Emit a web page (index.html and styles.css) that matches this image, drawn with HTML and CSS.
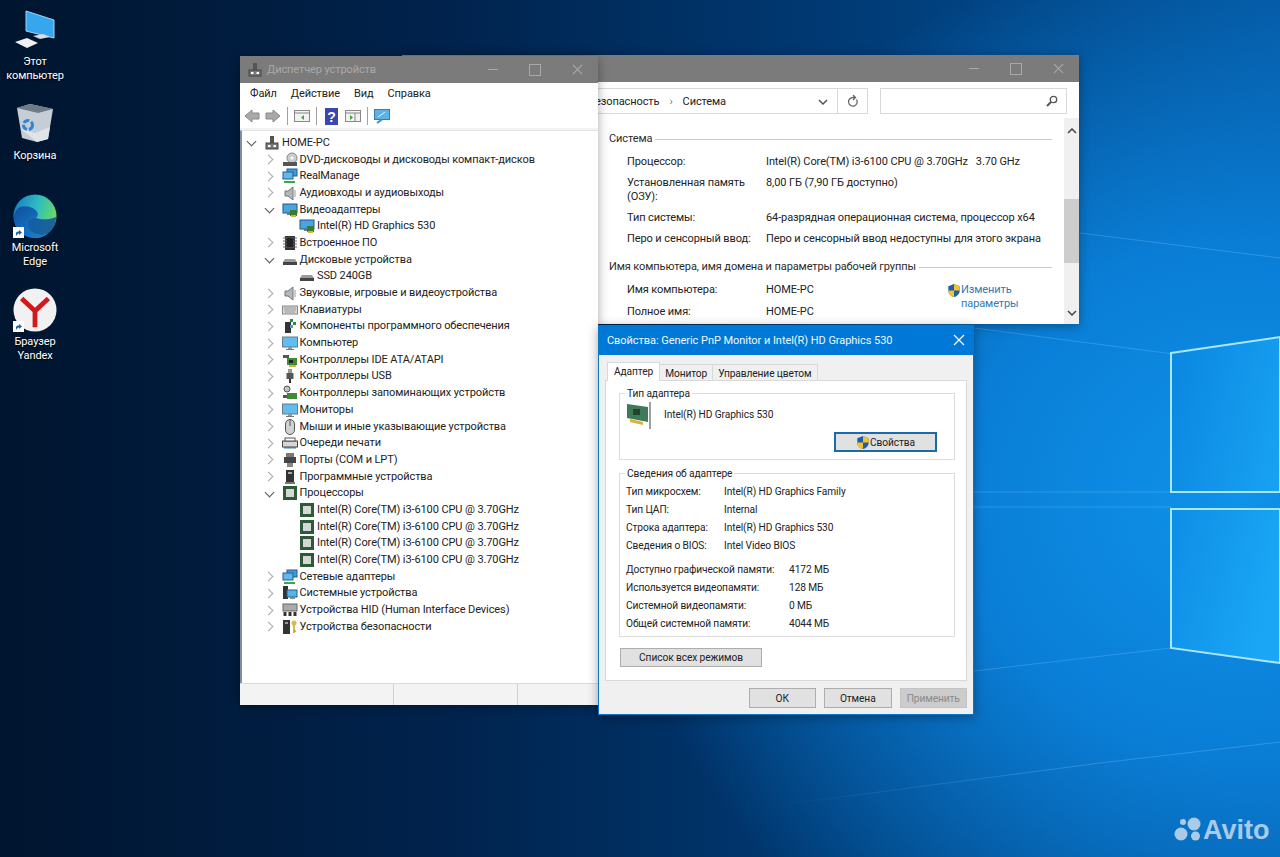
FILE: index.html
```html
<!DOCTYPE html>
<html lang="ru">
<head>
    <meta charset="UTF-8">
    <title>Рабочий стол</title>
    <link rel="stylesheet" href="styles.css">
</head>
<body>
<!-- иконки -->
<svg class="defs" width="0" height="0">
    <defs>
        <linearGradient id="edgeBg" x1="0" y1="0.3" x2="1" y2="0.6">
            <stop offset="0" stop-color="#1c7fc4"/>
            <stop offset="0.5" stop-color="#2fbcc0"/>
            <stop offset="1" stop-color="#6fdc5a"/>
        </linearGradient>
        <linearGradient id="edgeWave" x1="0" y1="0" x2="1" y2="1">
            <stop offset="0" stop-color="#0f4f9e"/>
            <stop offset="1" stop-color="#1b86d8"/>
        </linearGradient>
        <linearGradient id="paneTop" x1="0" y1="0" x2="1" y2="0.7">
            <stop offset="0" stop-color="#0a86e0"/>
            <stop offset="1" stop-color="#1aa6f5"/>
        </linearGradient>
        <linearGradient id="beamFade" gradientUnits="userSpaceOnUse" x1="772" y1="0" x2="1280" y2="0">
            <stop offset="0" stop-color="#7cc8ff" stop-opacity="0"/>
            <stop offset="0.6" stop-color="#7cc8ff" stop-opacity="0.3"/>
        </linearGradient>
        <symbol id="i-pc" viewBox="0 0 16 16"><rect x="6" y="1" width="4" height="7" fill="#555"/><rect x="2" y="8" width="12" height="6" fill="#777" stroke="#444"/><rect x="4" y="10" width="2.500" height="2" fill="#fff"/><rect x="9.500" y="10" width="2.500" height="2" fill="#fff"/></symbol>
        <symbol id="i-disc" viewBox="0 0 16 16"><circle cx="10" cy="6" r="5" fill="#c9ccd0" stroke="#888"/><circle cx="10" cy="6" r="1.5" fill="#fff"/><rect x="1" y="10" width="14" height="4" fill="#555"/></symbol>
        <symbol id="i-net" viewBox="0 0 16 16"><rect x="5" y="1" width="10" height="7" fill="#3f9ad8" stroke="#235f8f"/><rect x="1" y="4" width="10" height="7" fill="#62b8ea" stroke="#235f8f"/><rect x="2" y="13" width="11" height="2" fill="#3da646"/></symbol>
        <symbol id="i-sound" viewBox="0 0 16 16"><path d="M3 6h3l5-4v13l-5-4H3z" fill="#b4b7ba" stroke="#777"/><path d="M13 5v7" stroke="#999"/></symbol>
        <symbol id="i-video" viewBox="0 0 16 16"><rect x="1" y="2" width="14" height="9" fill="#4aa4de" stroke="#1e5a86"/><rect x="5" y="11" width="6" height="2" fill="#777"/><rect x="8" y="8" width="7" height="6" fill="#3c7a2e"/><rect x="9" y="13" width="5" height="2" fill="#d9b23a"/></symbol>
        <symbol id="i-fw" viewBox="0 0 16 16"><rect x="3" y="1" width="10" height="14" fill="#333"/><path d="M1 3h14M1 6h14M1 9h14M1 12h14" stroke="#666"/><rect x="5" y="3" width="6" height="9" fill="#222"/></symbol>
        <symbol id="i-hdd" viewBox="0 0 16 16"><path d="M3 7h10l2 3v3H1v-3z" fill="#9a9a9a"/><rect x="1" y="10" width="14" height="3" fill="#444"/></symbol>
        <symbol id="i-kbd" viewBox="0 0 16 16"><rect x="0.5" y="4" width="15" height="8" fill="#d7d8da" stroke="#888"/><path d="M2 6h12M2 8h12M3 10h10" stroke="#999"/></symbol>
        <symbol id="i-soft" viewBox="0 0 16 16"><rect x="3" y="4" width="6" height="11" fill="#333"/><rect x="8" y="1" width="3" height="3" fill="#2f8a3a"/><rect x="11" y="4" width="3" height="3" fill="#2f8a3a"/><rect x="8" y="7" width="3" height="3" fill="#3aa0d8"/></symbol>
        <symbol id="i-comp" viewBox="0 0 16 16"><rect x="0.5" y="2" width="15" height="10" fill="#5fbdf0" stroke="#6b7b88"/><rect x="6" y="12" width="4" height="2" fill="#999"/><rect x="4" y="14" width="8" height="1" fill="#777"/></symbol>
        <symbol id="i-ide" viewBox="0 0 16 16"><path d="M1 3h6v3H1z" fill="#555"/><rect x="5" y="6" width="10" height="7" fill="#3f8a36"/><rect x="7" y="8" width="4" height="3" fill="#222"/><rect x="7" y="13" width="7" height="2" fill="#d9b23a"/></symbol>
        <symbol id="i-usb" viewBox="0 0 16 16"><rect x="6" y="1" width="4" height="4" fill="#999"/><rect x="4.5" y="5" width="7" height="6" fill="#555"/><path d="M8 11v4" stroke="#333" stroke-width="2"/></symbol>
        <symbol id="i-store" viewBox="0 0 16 16"><circle cx="5" cy="4" r="3" fill="#c0c3c6" stroke="#555"/><rect x="5" y="8" width="10" height="6" fill="#3f8a36"/><rect x="1" y="10" width="4" height="3" fill="#555"/></symbol>
        <symbol id="i-mouse" viewBox="0 0 16 16"><rect x="3.5" y="0.5" width="9" height="15" rx="4.5" fill="#cfd1d3" stroke="#555"/><path d="M8 1v6" stroke="#555"/></symbol>
        <symbol id="i-print" viewBox="0 0 16 16"><rect x="0.5" y="6" width="15" height="6" fill="#d5d6d8" stroke="#444"/><rect x="3" y="3" width="10" height="3" fill="#fff" stroke="#555"/><rect x="2" y="12" width="12" height="1.5" fill="#3c7fb8"/></symbol>
        <symbol id="i-port" viewBox="0 0 16 16"><rect x="4" y="1" width="8" height="4" fill="#777"/><rect x="2" y="5" width="12" height="6" fill="#444"/><rect x="5" y="11" width="6" height="4" fill="#888"/></symbol>
        <symbol id="i-swdev" viewBox="0 0 16 16"><rect x="4" y="1" width="8" height="12" fill="#333"/><rect x="6" y="3" width="4" height="2" fill="#aaa"/><rect x="3" y="13" width="10" height="2" fill="#777"/></symbol>
        <symbol id="i-cpu" viewBox="0 0 16 16"><rect x="1" y="1" width="14" height="14" fill="#2e5a3a"/><rect x="4" y="4" width="8" height="8" fill="#d3d8d3"/></symbol>
        <symbol id="i-sys" viewBox="0 0 16 16"><rect x="1" y="1" width="5" height="13" fill="#333"/><rect x="5" y="5" width="10" height="7" fill="#58b3e8" stroke="#23628f"/><rect x="8" y="12" width="5" height="2" fill="#888"/></symbol>
        <symbol id="i-hid" viewBox="0 0 16 16"><rect x="1" y="2" width="14" height="7" fill="#a8abae" stroke="#666"/><path d="M3 10v4M8 10v4M13 10v4" stroke="#333" stroke-width="3"/></symbol>
        <symbol id="i-sec" viewBox="0 0 16 16"><rect x="1" y="1" width="7" height="14" fill="#333"/><rect x="3" y="3" width="3" height="2" fill="#999"/><circle cx="12" cy="4" r="2.5" fill="#e0b83a"/><path d="M12 6v8M12 12h2" stroke="#c99f26" stroke-width="1.5"/></symbol>
        <symbol id="i-shield" viewBox="0 0 16 16"><path d="M8 0.5 14.5 3v5c0 4-3 6.500-6.500 7.500C4.500 14.500 1.500 12 1.500 8V3z" fill="#1f5fa8"/><path d="M8 0.500 14.500 3v5H8zM8 8v7.500C4.500 14.500 1.500 12 1.500 8z" fill="#f2c230"/></symbol>
        <symbol id="i-link" viewBox="0 0 11 11"><rect width="11" height="11" fill="#fff"/><path d="M3 9V6.500C3 5 4 4.500 6 4.500V3l3 2.500L6 8V6.500C5 6.500 4.500 7 3 9z" fill="#1c5fa8"/></symbol>
        <symbol id="i-x" viewBox="0 0 12 12"><path d="M1 1 11 11M11 1 1 11" fill="none" stroke="currentColor" stroke-width="1.200"/></symbol>
    </defs>
</svg>

<!-- обои -->
<svg class="wallpaper" viewBox="0 0 1280 857" width="1280" height="857">
    <g stroke="#7cc8ff" stroke-opacity="0.3" fill="none">
        <path d="M1080 233 1280 258M974 328 1280 368M974 492H1171M974 507H1171M974 671 1171 648 1280 636"/>
    </g>
    <path d="M772 806 1100 763 1280 742" fill="none" stroke="url(#beamFade)"/>
    <path d="M1171 353 1280 337V492H1171zM1171 509H1280V663L1171 648z" fill="url(#paneTop)" stroke="#a8e8ff" stroke-width="2"/>
</svg>

<!-- значки рабочего стола -->
<div class="desktop-icons">
    <div class="shortcut">
        <svg class="shortcut-pic" viewBox="0 0 44 46">
            <path d="M13 3 41 12V30L13 23z" fill="#36a6ee" stroke="#9ed6f6"/>
            <path d="M20 28 30 26 37 29 27 31z" fill="#d9dde0"/>
            <path d="M2 34 14 30 25 35 14 40z" fill="#eef0f2"/>
        </svg>
        <span>Этот<br>компьютер</span>
    </div>
    <div class="shortcut">
        <svg class="shortcut-pic" viewBox="0 0 44 46">
            <path d="M4 6 17 2 40 7 35 37 24 40 9 36z" fill="#c5ced6"/>
            <path d="M4 6 17 2 40 7 25 11z" fill="#6f7b85"/>
            <path d="M8 27 24 40 35 37 37 25 22 31z" fill="#dfe4e8"/>
            <circle cx="15" cy="23" r="4.500" fill="none" stroke="#2f86d8" stroke-width="3" stroke-dasharray="6 2"/>
        </svg>
        <span>Корзина</span>
    </div>
    <div class="shortcut">
        <div class="shortcut-pic-wrap">
            <svg class="shortcut-pic big" viewBox="0 0 46 46">
                <circle cx="23" cy="23" r="22.500" fill="url(#edgeBg)"/>
                <path d="M1 24C2 12 13 11 21 15 27 18 27 23 24 25 20 24 15 26 15 32 15 40 27 46 37 41 31 46 26 46 23 46 10 46 1 36 1 24z" fill="url(#edgeWave)"/>
                <path d="M24 25C30 27 38 27 45 24 45 33 41 38 37 41 27 46 15 40 15 32 15 26 20 24 24 25z" fill="#0e4fa3" opacity="0.85"/>
            </svg>
            <svg class="shortcut-arrow" viewBox="0 0 11 11"><use href="#i-link"/></svg>
        </div>
        <span>Microsoft<br>Edge</span>
    </div>
    <div class="shortcut">
        <div class="shortcut-pic-wrap">
            <svg class="shortcut-pic big" viewBox="0 0 46 46">
                <circle cx="23" cy="23" r="22.500" fill="#f1f1f1"/>
                <path d="M9 11 23 24 37 11M23 24V41" fill="none" stroke="#d3181c" stroke-width="5"/>
            </svg>
            <svg class="shortcut-arrow" viewBox="0 0 11 11"><use href="#i-link"/></svg>
        </div>
        <span>Браузер<br>Yandex</span>
    </div>
</div>

<!-- окно Система -->
<div class="window system">
    <header class="title-bar idle">
        <div class="title-buttons">
            <span class="min"></span>
            <span class="max"></span>
            <span class="close"><svg width="11" height="11"><use href="#i-x"/></svg></span>
        </div>
    </header>
    <div class="address-row">
        <div class="address">
            <span>Система и безопасность</span>
            <span class="crumb">&rsaquo;</span>
            <span>Система</span>
            <svg class="addr-chevron" width="10" height="6" viewBox="0 0 10 6"><path d="M1 1 5 5 9 1" fill="none" stroke="#555" stroke-width="1.500"/></svg>
        </div>
        <div class="refresh">
            <svg width="12" height="13" viewBox="0 0 12 13"><path d="M9.500 4.500A4.300 4.300 0 1 1 6 2.500H8M6 0 8.500 2.500 6 5" fill="none" stroke="#666" stroke-width="1.300"/></svg>
        </div>
        <div class="search">
            <svg width="12" height="12" viewBox="0 0 12 12"><circle cx="7.500" cy="4.500" r="3.200" fill="none" stroke="#555" stroke-width="1.300"/><path d="M5 7 1 11" stroke="#555" stroke-width="2"/></svg>
        </div>
    </div>
    <div class="system-body">
        <div class="system-content">
            <div class="section-title"><span>Система</span></div>
            <div class="info-grid">
                <span>Процессор:</span><span>Intel(R) Core(TM) i3-6100 CPU @ 3.70GHz &nbsp; 3.70 GHz</span>
                <span>Установленная память (ОЗУ):</span><span>8,00 ГБ (7,90 ГБ доступно)</span>
                <span>Тип системы:</span><span>64-разрядная операционная система, процессор x64</span>
                <span>Перо и сенсорный ввод:</span><span>Перо и сенсорный ввод недоступны для этого экрана</span>
            </div>
            <div class="section-title second"><span>Имя компьютера, имя домена и параметры рабочей группы</span></div>
            <div class="info-grid name-grid">
                <span>Имя компьютера:</span><span>HOME-PC</span>
                <a class="change-link">
                    <svg width="14" height="15" viewBox="0 0 16 16"><use href="#i-shield"/></svg>
                    <span>Изменить<br>параметры</span>
                </a>
                <span>Полное имя:</span><span>HOME-PC</span>
            </div>
        </div>
        <div class="scrollbar">
            <svg width="10" height="6" viewBox="0 0 10 6"><path d="M1 5 5 1 9 5" fill="none" stroke="#444" stroke-width="1.500"/></svg>
            <div class="thumb"></div>
            <svg width="10" height="6" viewBox="0 0 10 6"><path d="M1 1 5 5 9 1" fill="none" stroke="#444" stroke-width="1.500"/></svg>
        </div>
    </div>
</div>

<!-- Диспетчер устройств -->
<div class="window devmgr">
    <header class="title-bar idle">
        <svg class="title-icon" width="16" height="16"><use href="#i-pc"/></svg>
        <span class="title-text">Диспетчер устройств</span>
        <div class="title-buttons">
            <span class="min"></span>
            <span class="max"></span>
            <span class="close"><svg width="11" height="11"><use href="#i-x"/></svg></span>
        </div>
    </header>
    <nav class="menu">
        <span>Файл</span>
        <span>Действие</span>
        <span>Вид</span>
        <span>Справка</span>
    </nav>
    <div class="toolbar">
        <svg width="16" height="14" viewBox="0 0 16 14"><path d="M1 7 8 1V4H15V10H8V13z" fill="#a9a9a9" stroke="#888"/></svg>
        <svg width="16" height="14" viewBox="0 0 16 14"><path d="M15 7 8 1V4H1V10H8V13z" fill="#a9a9a9" stroke="#888"/></svg>
        <i class="tool-sep"></i>
        <svg width="16" height="14" viewBox="0 0 16 14"><rect x="0.500" y="1.500" width="15" height="11" fill="#f2f2f2" stroke="#888"/><path d="M1 4H15" stroke="#888"/><path d="M10 6 7 8.500 10 11z" fill="#3a3"/></svg>
        <i class="tool-sep"></i>
        <svg class="tool-help" width="13" height="17" viewBox="0 0 13 17"><rect width="13" height="17" fill="#3b47b0"/><text x="6.500" y="14" text-anchor="middle" class="help-mark">?</text></svg>
        <svg width="16" height="14" viewBox="0 0 16 14"><rect x="0.500" y="1.500" width="15" height="11" fill="#f2f2f2" stroke="#888"/><path d="M1 4H15M10 4V12" stroke="#888"/><path d="M5 6 8 8.500 5 11z" fill="#3a3"/></svg>
        <i class="tool-sep"></i>
        <svg width="16" height="15" viewBox="0 0 16 15"><rect x="0.500" y="0.500" width="15" height="10" fill="#58b3e8" stroke="#3a7da8"/><path d="M3 14 8 10.500" stroke="#4a8fb8" stroke-width="2"/><path d="M4 8 11 3" stroke="#e8f6ff"/></svg>
    </div>
    <div class="tree">
        <div class="row l0 open"><svg class="ic"><use href="#i-pc"/></svg><span>HOME-PC</span></div>
        <div class="row l1"><svg class="ic"><use href="#i-disc"/></svg><span>DVD-дисководы и дисководы компакт-дисков</span></div>
        <div class="row l1"><svg class="ic"><use href="#i-net"/></svg><span>RealManage</span></div>
        <div class="row l1"><svg class="ic"><use href="#i-sound"/></svg><span>Аудиовходы и аудиовыходы</span></div>
        <div class="row l1 open"><svg class="ic"><use href="#i-video"/></svg><span>Видеоадаптеры</span></div>
        <div class="row l2"><svg class="ic"><use href="#i-video"/></svg><span>Intel(R) HD Graphics 530</span></div>
        <div class="row l1"><svg class="ic"><use href="#i-fw"/></svg><span>Встроенное ПО</span></div>
        <div class="row l1 open"><svg class="ic"><use href="#i-hdd"/></svg><span>Дисковые устройства</span></div>
        <div class="row l2"><svg class="ic"><use href="#i-hdd"/></svg><span>SSD 240GB</span></div>
        <div class="row l1"><svg class="ic"><use href="#i-sound"/></svg><span>Звуковые, игровые и видеоустройства</span></div>
        <div class="row l1"><svg class="ic"><use href="#i-kbd"/></svg><span>Клавиатуры</span></div>
        <div class="row l1"><svg class="ic"><use href="#i-soft"/></svg><span>Компоненты программного обеспечения</span></div>
        <div class="row l1"><svg class="ic"><use href="#i-comp"/></svg><span>Компьютер</span></div>
        <div class="row l1"><svg class="ic"><use href="#i-ide"/></svg><span>Контроллеры IDE ATA/ATAPI</span></div>
        <div class="row l1"><svg class="ic"><use href="#i-usb"/></svg><span>Контроллеры USB</span></div>
        <div class="row l1"><svg class="ic"><use href="#i-store"/></svg><span>Контроллеры запоминающих устройств</span></div>
        <div class="row l1"><svg class="ic"><use href="#i-comp"/></svg><span>Мониторы</span></div>
        <div class="row l1"><svg class="ic"><use href="#i-mouse"/></svg><span>Мыши и иные указывающие устройства</span></div>
        <div class="row l1"><svg class="ic"><use href="#i-print"/></svg><span>Очереди печати</span></div>
        <div class="row l1"><svg class="ic"><use href="#i-port"/></svg><span>Порты (COM и LPT)</span></div>
        <div class="row l1"><svg class="ic"><use href="#i-swdev"/></svg><span>Программные устройства</span></div>
        <div class="row l1 open"><svg class="ic"><use href="#i-cpu"/></svg><span>Процессоры</span></div>
        <div class="row l2"><svg class="ic"><use href="#i-cpu"/></svg><span>Intel(R) Core(TM) i3-6100 CPU @ 3.70GHz</span></div>
        <div class="row l2"><svg class="ic"><use href="#i-cpu"/></svg><span>Intel(R) Core(TM) i3-6100 CPU @ 3.70GHz</span></div>
        <div class="row l2"><svg class="ic"><use href="#i-cpu"/></svg><span>Intel(R) Core(TM) i3-6100 CPU @ 3.70GHz</span></div>
        <div class="row l2"><svg class="ic"><use href="#i-cpu"/></svg><span>Intel(R) Core(TM) i3-6100 CPU @ 3.70GHz</span></div>
        <div class="row l1"><svg class="ic"><use href="#i-net"/></svg><span>Сетевые адаптеры</span></div>
        <div class="row l1"><svg class="ic"><use href="#i-sys"/></svg><span>Системные устройства</span></div>
        <div class="row l1"><svg class="ic"><use href="#i-hid"/></svg><span>Устройства HID (Human Interface Devices)</span></div>
        <div class="row l1"><svg class="ic"><use href="#i-sec"/></svg><span>Устройства безопасности</span></div>
    </div>
    <footer class="status">
        <span></span>
        <span></span>
        <span></span>
    </footer>
</div>

<!-- диалог свойств -->
<div class="window props">
    <header class="title-bar active">
        <span class="title-text">Свойства: Generic PnP Monitor и Intel(R) HD Graphics 530</span>
        <svg class="dialog-close" width="12" height="12"><use href="#i-x"/></svg>
    </header>
    <div class="props-body">
        <div class="tabs">
            <span class="tab selected">Адаптер</span>
            <span class="tab">Монитор</span>
            <span class="tab">Управление цветом</span>
        </div>
        <div class="tab-panel">
            <fieldset class="group adapter-type">
                <legend>Тип адаптера</legend>
                <div class="adapter-line">
                    <svg width="28" height="28" viewBox="0 0 28 28">
                        <path d="M1 3 22 6V21L1 17z" fill="#3d7a55"/>
                        <rect x="7" y="8" width="7" height="6" fill="#24402f"/>
                        <path d="M4 18 17 21V24L4 21z" fill="#d6b23c"/>
                        <path d="M24 1V28" stroke="#9aa0a6" stroke-width="2"/>
                    </svg>
                    <span>Intel(R) HD Graphics 530</span>
                </div>
                <button type="button" class="btn default">
                    <svg width="14" height="15" viewBox="0 0 16 16"><use href="#i-shield"/></svg>Свойства
                </button>
            </fieldset>
            <fieldset class="group adapter-info">
                <legend>Сведения об адаптере</legend>
                <div class="pairs chip">
                    <span>Тип микросхем:</span><span>Intel(R) HD Graphics Family</span>
                    <span>Тип ЦАП:</span><span>Internal</span>
                    <span>Строка адаптера:</span><span>Intel(R) HD Graphics 530</span>
                    <span>Сведения о BIOS:</span><span>Intel Video BIOS</span>
                </div>
                <div class="pairs memory">
                    <span>Доступно графической памяти:</span><span>4172 МБ</span>
                    <span>Используется видеопамяти:</span><span>128 МБ</span>
                    <span>Системной видеопамяти:</span><span>0 МБ</span>
                    <span>Общей системной памяти:</span><span>4044 МБ</span>
                </div>
            </fieldset>
            <button type="button" class="btn modes">Список всех режимов</button>
        </div>
        <div class="dialog-actions">
            <button type="button" class="btn">ОК</button>
            <button type="button" class="btn">Отмена</button>
            <button type="button" class="btn disabled">Применить</button>
        </div>
    </div>
</div>

<!-- водяной знак -->
<div class="avito">
    <svg width="28" height="26" viewBox="0 0 28 26">
        <circle cx="7" cy="17" r="6.500"/>
        <circle cx="20" cy="7" r="6.500"/>
        <circle cx="9" cy="5" r="3"/>
        <circle cx="21.500" cy="19" r="4.500"/>
    </svg>
    <span>Avito</span>
</div>
</body>
</html>
```

FILE: styles.css
```css
* {
    box-sizing: border-box;
}
html, body {
    margin: 0;
    height: 100%;
}
body {
    position: relative;
    width: 1280px;
    height: 857px;
    overflow: hidden;
    font: 11px/14px Roboto, "Noto Sans", sans-serif;
    letter-spacing: -0.1px;
    color: #222;
    background:
        radial-gradient(ellipse 620px 560px at 1240px 500px, #0f92ea 0%, #0a7ed6 45%, rgba(8, 100, 180, 0) 100%),
        linear-gradient(90deg, #00152f 0%, #00234d 35%, #003a74 65%, #04559e 100%);
}
.defs {
    position: absolute;
}
.wallpaper {
    position: absolute;
    top: 0;
    left: 0;
}

/* значки рабочего стола */
.desktop-icons {
    position: absolute;
    top: 8px;
    left: 0;
    width: 70px;
    display: flex;
    flex-direction: column;
}
.shortcut {
    height: 93.5px;
    display: flex;
    flex-direction: column;
    align-items: center;
    color: #fff;
    text-align: center;
    text-shadow: 0 1px 2px #000;
}
.shortcut span {
    margin-top: 1px;
}
.shortcut-pic {
    display: block;
    width: 44px;
    height: 46px;
}
.shortcut-pic-wrap {
    position: relative;
    margin: -1px 0 2px;
}
.shortcut-pic.big {
    height: 44px;
}
.shortcut-arrow {
    position: absolute;
    left: 0;
    bottom: 0;
    width: 11px;
    height: 11px;
}

/* окна */
.window {
    position: absolute;
    display: flex;
    flex-direction: column;
    box-shadow: 0 2px 10px rgba(0, 0, 0, 0.35);
}
.title-bar {
    display: flex;
    align-items: center;
    flex: none;
}
.title-bar.idle {
    height: 27px;
    background: #7b7b7b;
    color: #a9a9a9;
}
.title-bar.active {
    height: 30px;
    padding: 2px 8px 0;
    background: #0078d7;
    color: #f0f8ff;
    justify-content: space-between;
    letter-spacing: -0.05px;
}
.title-icon {
    margin: 0 4px 0 7px;
}
.title-buttons {
    margin-left: auto;
    display: flex;
    align-items: center;
    color: #a9a9a9;
}
.title-buttons span {
    width: 42px;
    display: flex;
    justify-content: center;
    align-items: center;
}
.title-buttons .min::before {
    content: "";
    width: 10px;
    height: 1px;
    background: #a9a9a9;
}
.title-buttons .max::before {
    content: "";
    width: 10px;
    height: 10px;
    border: 1px solid #a9a9a9;
}
.dialog-close {
    color: #fff;
    margin-top: -2px;
}

/* окно Система */
.system {
    top: 55px;
    left: 402px;
    width: 677px;
    height: 269px;
    background: #fff;
}
.address-row {
    flex: none;
    height: 36px;
    padding: 6px 12px 4px 0;
    display: flex;
}
.address {
    flex: 1;
    display: flex;
    align-items: center;
    justify-content: flex-end;
    gap: 10px;
    padding: 1px 9px 0 0;
    border: 1px solid #d9d9d9;
}
.crumb {
    color: #777;
}
.addr-chevron {
    margin-left: 82px;
}
.refresh {
    width: 30px;
    display: flex;
    align-items: center;
    justify-content: center;
    border: 1px solid #d9d9d9;
    border-left: 0;
}
.search {
    width: 187px;
    margin-left: 12px;
    display: flex;
    align-items: center;
    justify-content: flex-end;
    padding-right: 8px;
    border: 1px solid #d9d9d9;
}
.system-body {
    flex: 1;
    display: flex;
    min-height: 0;
}
.system-content {
    flex: 1;
    padding: 14px 12px 0 207px;
    overflow: hidden;
}
.section-title {
    display: flex;
    align-items: center;
    gap: 3px;
    color: #2b2b2b;
}
.section-title::after {
    content: "";
    flex: 1;
    height: 1px;
    background: #c8c8c8;
}
.section-title.second {
    margin-top: 14px;
}
.info-grid {
    margin: 9px 0 0 18px;
    display: grid;
    grid-template-columns: 139px 1fr;
    row-gap: 7px;
}
.name-grid {
    grid-template-columns: 139px 181px auto;
    row-gap: 8px;
}
.change-link {
    grid-column: 3;
    grid-row: 1 / span 2;
    display: flex;
    align-items: flex-start;
    color: #2f79b5;
}
.scrollbar {
    width: 15px;
    flex: none;
    background: #f0f0f0;
    display: flex;
    flex-direction: column;
    align-items: center;
    justify-content: space-between;
    padding: 10px 0 8px;
}
.thumb {
    width: 15px;
    height: 64px;
    margin-top: 65px;
    margin-bottom: auto;
    background: #cdcdcd;
}

/* Диспетчер устройств */
.devmgr {
    top: 56px;
    left: 240px;
    width: 358px;
    height: 649px;
    background: #f3f3f3;
}
.menu {
    flex: none;
    height: 21px;
    padding: 0 10px;
    display: flex;
    align-items: center;
    gap: 14px;
    background: #fff;
}
.toolbar {
    flex: none;
    height: 24px;
    padding: 0 4px;
    display: flex;
    align-items: center;
    gap: 5px;
    background: #fff;
}
.tool-sep {
    width: 1px;
    height: 18px;
    margin: 0 1px;
    background: #a0a0a0;
}
.tool-help {
    margin: 0 2px;
}
.help-mark {
    font: bold 14px "Liberation Sans", sans-serif;
    fill: #fff;
}
.tree {
    flex: 1;
    margin-top: 2px;
    padding-top: 3.5px;
    background: #fff;
    border-left: 2px solid #7f8d9c;
    border-top: 1px solid #e4e4e4;
}
.row {
    height: 16.7px;
    display: flex;
    align-items: center;
}
.row::before {
    content: "";
    flex: none;
    width: 6px;
    height: 6px;
    margin: 0 10px 0 5px;
    border-right: 1.5px solid #a8a8a8;
    border-top: 1.5px solid #a8a8a8;
    transform: rotate(45deg);
}
.row.open::before {
    border-color: #555;
    transform: translate(1px, -1px) rotate(135deg);
}
.row.l1 {
    padding-left: 17.5px;
}
.row.l2 {
    padding-left: 35px;
}
.row.l2::before {
    visibility: hidden;
}
.ic {
    flex: none;
    width: 16px;
    height: 16px;
    margin-right: 2px;
}
.status {
    flex: none;
    height: 22px;
    display: grid;
    grid-template-columns: 153px 124px 1fr;
    border-top: 1px solid #dcdcdc;
}
.status span + span {
    border-left: 1px solid #d0d0d0;
}

/* диалог свойств */
.props {
    top: 325px;
    left: 598px;
    width: 376px;
    height: 390px;
    border: 1px solid #0a76c8;
    border-top: 0;
    background: #f0f0f0;
}
.props-body {
    flex: 1;
    padding: 7px 6px 7px;
    display: flex;
    flex-direction: column;
    font-size: 10.2px;
}
.tabs {
    display: flex;
    align-items: flex-end;
    padding-left: 2px;
    height: 18px;
}
.tab {
    height: 16px;
    padding: 2px 5px 0;
    border: 1px solid #d9d9d9;
    border-bottom: 0;
    border-left: 0;
    background: #f0f0f0;
}
.tab.selected {
    height: 19px;
    margin-bottom: -1px;
    padding: 2px 6px 0;
    background: #fff;
    border-left: 1px solid #d9d9d9;
    position: relative;
    z-index: 1;
}
.tab-panel {
    height: 301px;
    background: #fff;
    border: 1px solid #d9d9d9;
}
.group {
    margin: 5px 11px 0 13px;
    padding: 0 0 0 6px;
    min-width: 0;
    border: 1px solid #dcdcdc;
}
.group legend {
    padding: 1px 2px 0;
    margin-left: -1px;
    line-height: 14px;
}
.adapter-type {
    height: 74px;
}
.adapter-line {
    display: flex;
    align-items: center;
    gap: 10px;
}
.btn {
    display: block;
    height: 20px;
    padding: 1px 0 0;
    font: inherit;
    letter-spacing: inherit;
    color: inherit;
    background: #e1e1e1;
    border: 1px solid #adadad;
}
.btn.default {
    width: 103px;
    margin: 3px 17px 0 auto;
    display: flex;
    align-items: center;
    justify-content: center;
    border: 2px solid #1a6aa8;
}
.adapter-info {
    margin-top: 6px;
    height: 171px;
    padding-top: 2px;
}
.pairs {
    display: grid;
    grid-auto-rows: 18px;
    align-items: center;
}
.chip {
    grid-template-columns: 98px 1fr;
}
.memory {
    margin-top: 6px;
    grid-template-columns: 163px 1fr;
}
.btn.modes {
    width: 142px;
    height: 19px;
    margin: 11px 0 0 14px;
}
.dialog-actions {
    margin-top: 7px;
    display: flex;
    justify-content: flex-end;
    gap: 8px;
}
.dialog-actions .btn {
    width: 67.5px;
}
.btn.disabled {
    color: #8a8a8a;
    background: #ccc;
    border-color: #c4c4c4;
}

/* водяной знак */
.avito {
    position: absolute;
    left: 1174px;
    top: 812px;
    display: flex;
    align-items: center;
    gap: 1px;
    color: #a9cbe8;
    fill: #a9cbe8;
    font: bold 27px/36px "Liberation Sans", sans-serif;
    letter-spacing: 0;
}
```
